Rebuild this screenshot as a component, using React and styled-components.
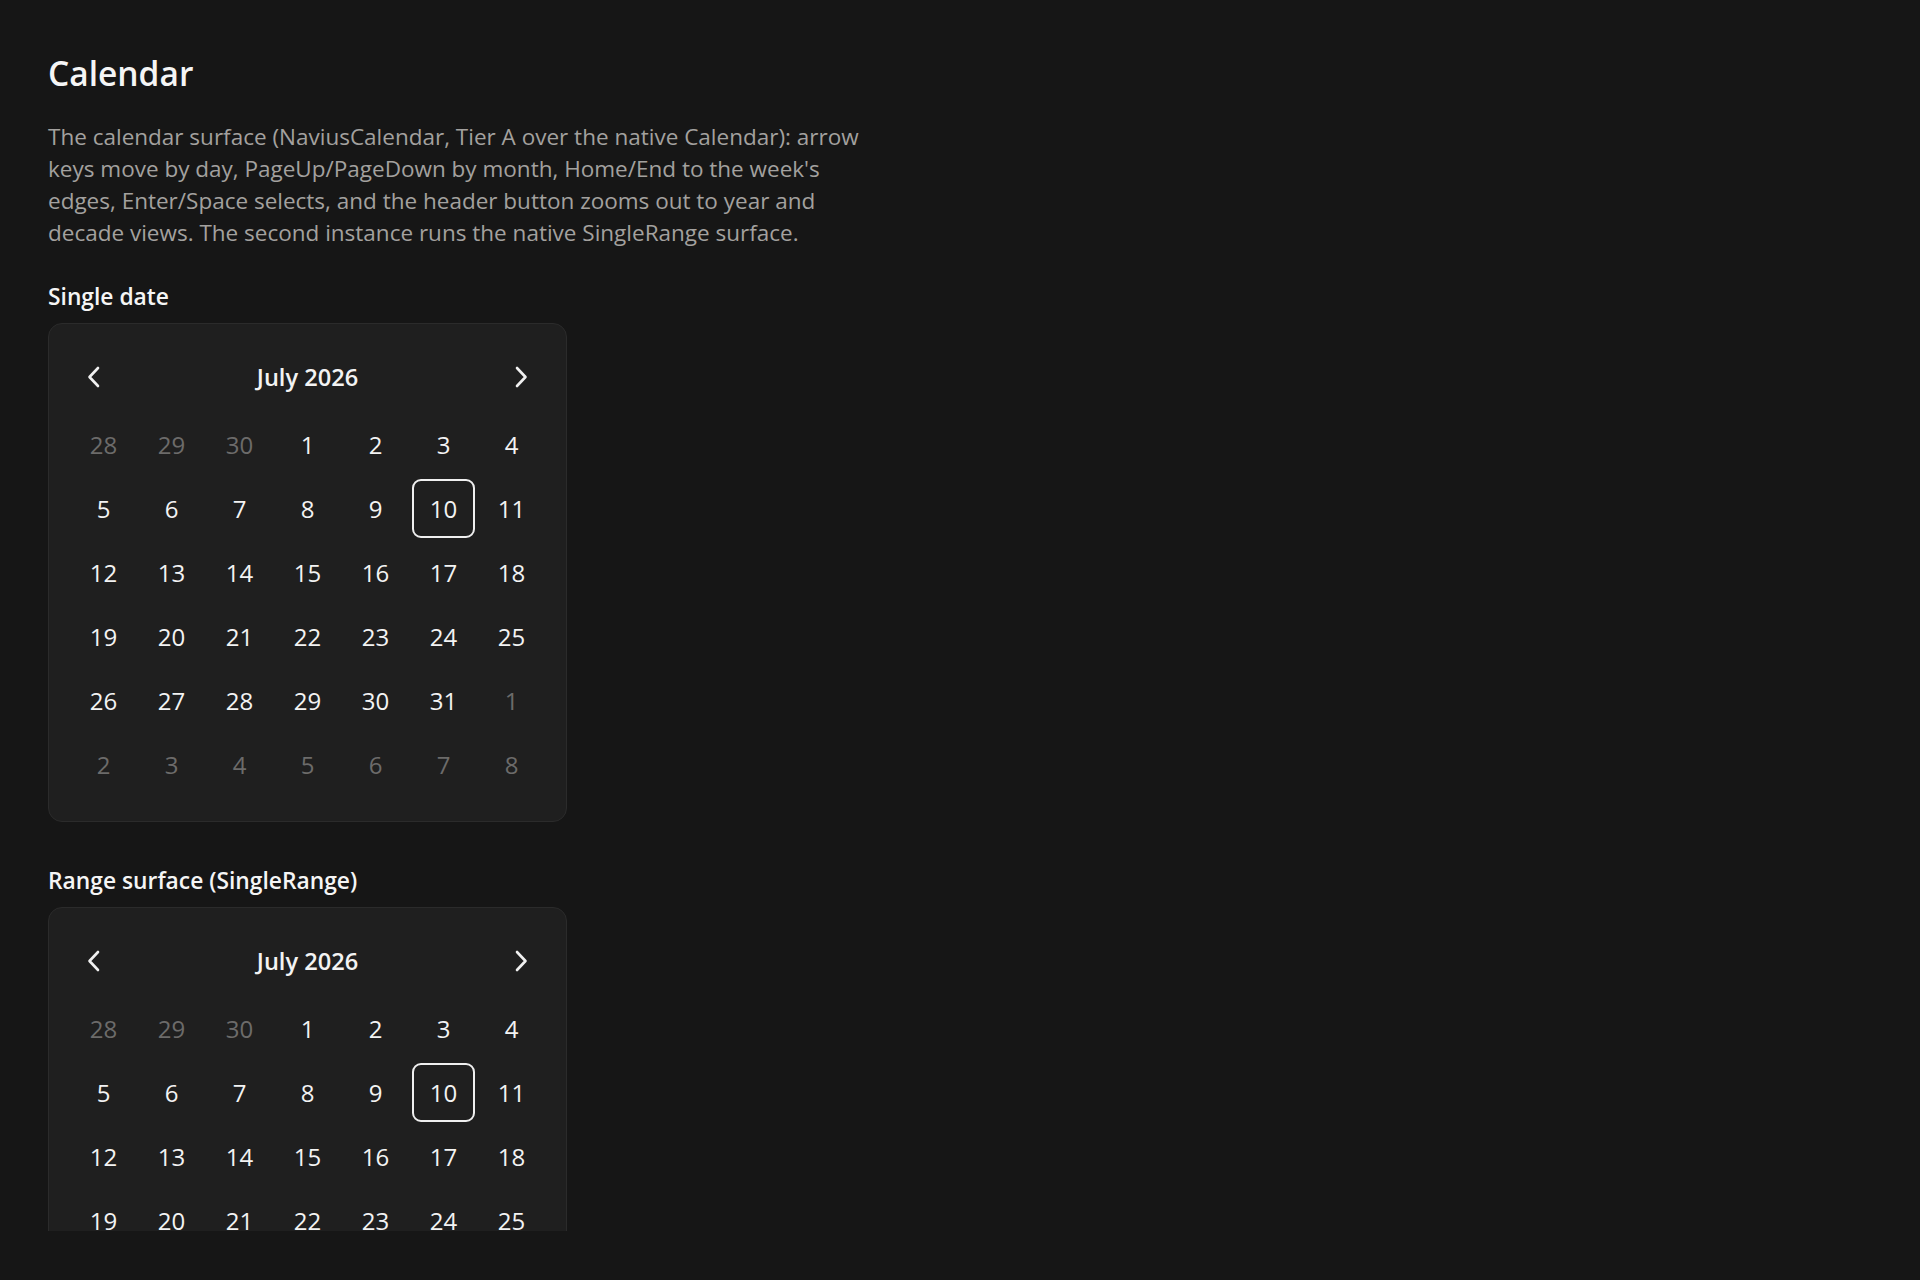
import styled, { createGlobalStyle } from 'styled-components'

const GlobalStyle = createGlobalStyle`
  html, body {
    margin: 0;
    padding: 0;
    background: #161616;
  }
  body {
    font-family: "Open Sans", "Noto Sans", sans-serif;
    color: #f3f3f3;
  }
`

export const Page = styled.div`
  width: 100%;
  height: 1231px;
  overflow: hidden;
  background: #161616;
`
export const Content = styled.main`
  padding: 50px 48px 0;
  display: flex;
  flex-direction: column;
  align-items: flex-start;
`
export const Title = styled.h1`
  margin: 0;
  font-size: 33.5px;
  line-height: 46px;
  font-weight: 600;
  color: #f5f5f5;
`
export const Lead = styled.p`
  margin: 25px 0 0;
  width: 835px;
  font-size: 22.5px;
  line-height: 32px;
  color: #a3a19f;
`
export const SectionLabel = styled.h2`
  margin: ${({ first }) => (first ? '33px' : '44px')} 0 11px;
  font-size: 22.8px;
  line-height: 30px;
  font-weight: 600;
  color: #f5f5f5;
`
export const Card = styled.section`
  box-sizing: border-box;
  width: 519px;
  padding: 29px 23px 27px;
  background: #1f1f1f;
  border: 1px solid #2b2b2b;
  border-radius: 14px;
`
export const Header = styled.div`
  display: flex;
  align-items: center;
  justify-content: space-between;
  height: 48px;
  margin-bottom: 14px;
`
export const NavButton = styled.button`
  width: 44px;
  height: 44px;
  display: flex;
  align-items: center;
  justify-content: center;
  padding: 0;
  border: none;
  background: transparent;
  color: #f0f0f0;
  cursor: pointer;
`
export const MonthButton = styled.button`
  border: none;
  background: transparent;
  padding: 0 12px;
  font-family: inherit;
  font-size: 23.6px;
  font-weight: 600;
  color: #f3f3f3;
`
export const DayGrid = styled.div`
  display: grid;
  grid-template-columns: repeat(7, 63px);
  grid-auto-rows: 59px;
  column-gap: 5px;
  row-gap: 5px;
  justify-content: center;
`
export const Day = styled.button`
  display: flex;
  align-items: center;
  justify-content: center;
  box-sizing: border-box;
  padding: 0;
  border: 2px solid ${({ selected }) => (selected ? '#efefef' : 'transparent')};
  border-radius: 9px;
  background: transparent;
  font-family: inherit;
  font-size: 24px;
  color: ${({ muted }) => (muted ? '#6c6b6a' : '#f3f3f3')};
`

const Chevron = ({ dir }) => (
  <svg width="16" height="22" viewBox="0 0 16 22" fill="none">
    <path
      d={dir === 'left' ? 'M12 2 L3.5 11 L12 20' : 'M4 2 L12.5 11 L4 20'}
      stroke="currentColor"
      strokeWidth="2.6"
      strokeLinecap="round"
      strokeLinejoin="round"
    />
  </svg>
)

const days = [
  ...[28, 29, 30].map((d) => ({ d, muted: true })),
  ...Array.from({ length: 31 }, (_, i) => ({ d: i + 1, muted: false })),
  ...Array.from({ length: 8 }, (_, i) => ({ d: i + 1, muted: true })),
]

const Calendar = () => (
  <Card>
    <Header>
      <NavButton aria-label="Previous month"><Chevron dir="left" /></NavButton>
      <MonthButton>July 2026</MonthButton>
      <NavButton aria-label="Next month"><Chevron dir="right" /></NavButton>
    </Header>
    <DayGrid>
      {days.map((day, i) => (
        <Day key={i} muted={day.muted} selected={!day.muted && day.d === 10}>
          {day.d}
        </Day>
      ))}
    </DayGrid>
  </Card>
)

export default function App() {
  return (
    <>
      <GlobalStyle />
      <Page>
        <Content>
          <Title>Calendar</Title>
          <Lead>
            The calendar surface (NaviusCalendar, Tier A over the native Calendar): arrow
            keys move by day, PageUp/PageDown by month, Home/End to the week's edges,
            Enter/Space selects, and the header button zooms out to year and decade views.
            The second instance runs the native SingleRange surface.
          </Lead>
          <SectionLabel first>Single date</SectionLabel>
          <Calendar />
          <SectionLabel>Range surface (SingleRange)</SectionLabel>
          <Calendar />
        </Content>
      </Page>
    </>
  )
}
